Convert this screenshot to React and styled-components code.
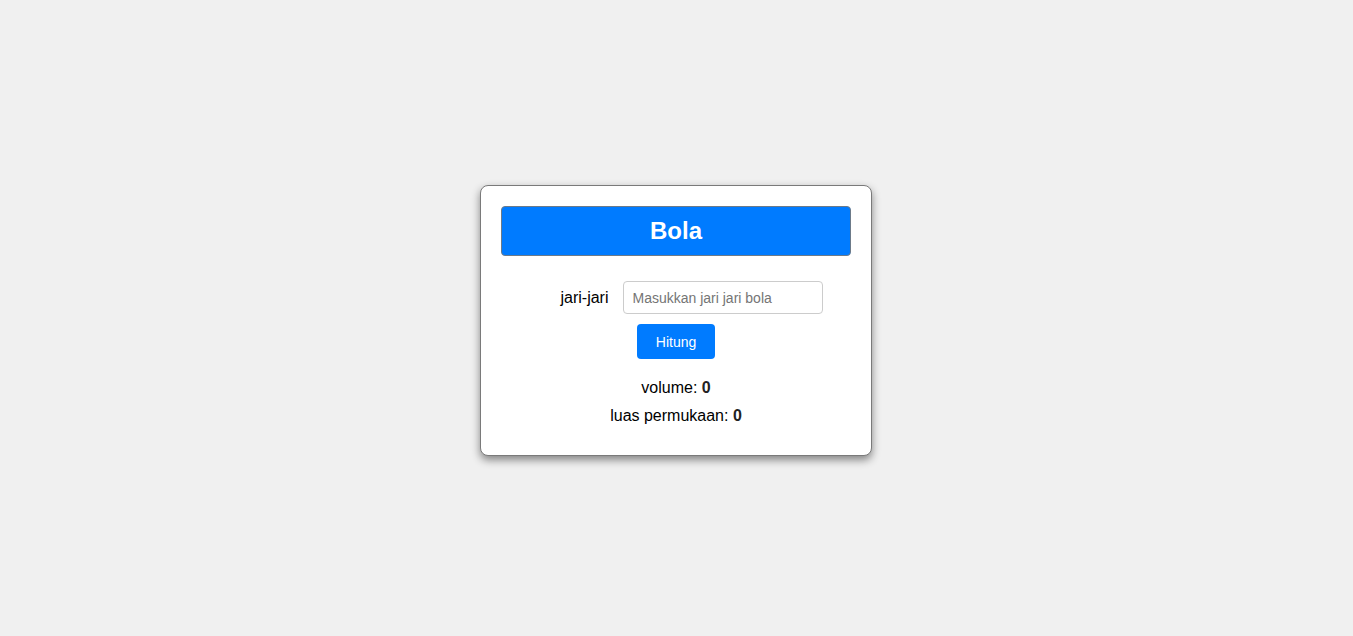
import React, { useState } from 'react';
import styled, { createGlobalStyle } from 'styled-components';

const GlobalStyle = createGlobalStyle`
  body {
    margin: 0;
    background: #f0f0f0;
    font-family: "Liberation Sans", Arial, sans-serif;
  }
`;

function App() {
    const [r, setR] = useState('');
    const [hasil, setHasil] = useState({ volume: 0, luas: 0 });

    const hitung = () => {
        const n = parseFloat(r) || 0;
        setHasil({
            volume: +((4 / 3) * Math.PI * n * n * n).toFixed(2),
            luas: +(4 * Math.PI * n * n).toFixed(2),
        });
    };

    return (
        <>
            <GlobalStyle />
            <Page>
                <Card>
                    <Title>Bola</Title>
                    <Row>
                        <Label htmlFor="r">jari-jari</Label>
                        <Input id="r" placeholder="Masukkan jari jari bola" value={r} onChange={e => setR(e.target.value)} />
                    </Row>
                    <Button onClick={hitung}>Hitung</Button>
                    <Result>volume: <b>{hasil.volume}</b></Result>
                    <Result>luas permukaan: <b>{hasil.luas}</b></Result>
                </Card>
            </Page>
        </>
    )
}

const Page = styled.div`
display: flex;
justify-content: center;
align-items: flex-start;
min-height: 100vh;
padding-top: 185px;
padding-right: 1px;
box-sizing: border-box;
`;

const Card = styled.div`
width: 350px;
padding: 20px 20px 30px;
background: #fff;
border: 1px solid #7a7a7a;
border-radius: 8px;
box-shadow: 0 4px 8px rgba(0, 0, 0, 0.45);
display: flex;
flex-direction: column;
align-items: center;
`;

const Title = styled.h1`
box-sizing: border-box;
width: 100%;
height: 50px;
margin: 0 0 25px;
display: flex;
align-items: center;
justify-content: center;
background: #007bff;
color: #fff;
border: 1px solid #6c7a89;
border-radius: 4px;
font-size: 24px;
font-weight: bold;
`;

const Row = styled.div`
display: flex;
align-items: center;
justify-content: center;
width: 100%;
padding-left: 31px;
box-sizing: border-box;
margin-bottom: 10px;
`;

const Label = styled.label`
font-size: 16px;
color: #000;
margin-right: 14px;
`;

const Input = styled.input`
box-sizing: border-box;
width: 200px;
height: 33px;
padding: 0 9px;
border: 1px solid #ccc;
border-radius: 4px;
font-family: "Liberation Sans", Arial, sans-serif;
font-size: 14px;
&::placeholder {
    color: #757575;
}
`;

const Button = styled.button`
width: 78px;
height: 35px;
background: #007bff;
color: #fff;
border: none;
border-radius: 4px;
font-family: "Liberation Sans", Arial, sans-serif;
font-size: 14px;
cursor: pointer;
margin-bottom: 10px;
`;

const Result = styled.p`
margin: 10px 0 0;
font-size: 16px;
line-height: 18px;
color: #000;
b {
    color: #222;
}
`;

export default App;
